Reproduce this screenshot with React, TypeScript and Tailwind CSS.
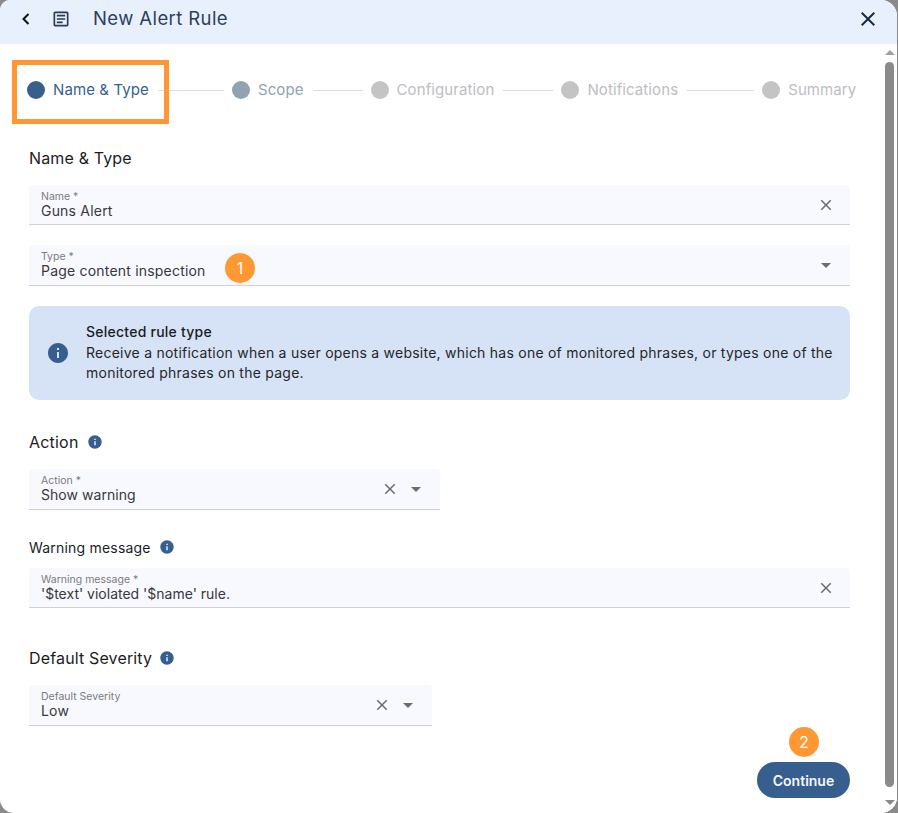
import React from "react";

const F = "[font-family:Inter,'Liberation_Sans',sans-serif]";

function InfoIcon({ size }: { size: number }) {
  return (
    <svg width={size} height={size} viewBox="0 0 24 24" className="shrink-0">
      <path
        fill="#365f8f"
        d="M12 2C6.48 2 2 6.48 2 12s4.48 10 10 10 10-4.48 10-10S17.52 2 12 2zm1 15h-2v-6h2v6zm0-8h-2V7h2v2z"
      />
    </svg>
  );
}

function Clear() {
  return (
    <svg width="18" height="18" viewBox="0 0 24 24" className="shrink-0">
      <path
        fill="#6b6b70"
        d="M19 6.41 17.59 5 12 10.59 6.41 5 5 6.41 10.59 12 5 17.59 6.41 19 12 13.41 17.59 19 19 17.59 13.41 12z"
      />
    </svg>
  );
}

function Caret() {
  return (
    <svg width="24" height="24" viewBox="0 0 24 24" className="shrink-0">
      <path fill="#6b6b70" d="M7 10l5 5 5-5z" />
    </svg>
  );
}

function Field({
  label,
  value,
  className,
  valueClass = "tracking-[0.2px]",
  children,
}: {
  label: string;
  value: string;
  className: string;
  valueClass?: string;
  children?: React.ReactNode;
}) {
  return (
    <div
      className={`flex items-center justify-between rounded-t-[4px] border-b border-[#d0d0d6] bg-[#f8f9ff] pl-3 ${className}`}
    >
      <div className="mt-[5px] flex flex-col self-start">
        <span className="text-[10.5px] leading-[13px] text-[#7b7b80]">{label}</span>
        <span className={`text-[14px] leading-[16px] text-[#37373c] ${valueClass}`}>{value}</span>
      </div>
      {children}
    </div>
  );
}

function Step({ label, dot, text }: { label: string; dot: string; text: string }) {
  return (
    <div className="flex shrink-0 items-center gap-2">
      <span className={`h-[18px] w-[18px] rounded-full ${dot}`} />
      <span className={`text-[15px] leading-[18px] tracking-[0.1px] ${text}`}>{label}</span>
    </div>
  );
}

function Line({ className }: { className: string }) {
  return <div className={`ml-[9px] mr-2 h-px shrink-0 bg-[#dcdcdc] ${className}`} />;
}

function Badge({ n, className }: { n: string; className: string }) {
  return (
    <span
      className={`absolute flex h-[30px] w-[30px] items-center justify-center rounded-full bg-[#ff9833] text-[16px] text-white ${className}`}
    >
      {n}
    </span>
  );
}

export default function App() {
  return (
    <div className={`relative h-[813px] w-[898px] overflow-hidden bg-[#8a8a8a] ${F}`}>
      <div className="flex h-[813px] w-[897px] flex-col overflow-hidden rounded-tl-[10px] rounded-tr-[16px] rounded-bl-[14px] rounded-br-[16px] bg-white">
        <header className="flex h-[44px] shrink-0 items-center bg-[#e9f0fd] pb-[6px] pl-[17px] pr-[17px]">
          <svg width="18" height="18" viewBox="0 0 18 18">
            <path fill="none" stroke="#111" strokeWidth="2" d="M11.5 4 6.5 9l5 5" />
          </svg>
          <svg width="20" height="20" viewBox="0 0 24 24" className="ml-[16px]">
            <path
              fill="#2a3a55"
              d="M19 5v14H5V5h14m0-2H5c-1.1 0-2 .9-2 2v14c0 1.1.9 2 2 2h14c1.1 0 2-.9 2-2V5c0-1.100-.9-2-2-2zM14 17H7v-2h7v2zm3-4H7v-2h10v2zm0-4H7V7h10v2z"
            />
          </svg>
          <h1 className="ml-[22px] text-[18.5px] tracking-[0.4px] text-[#2d3f5c]">New Alert Rule</h1>
          <svg width="24" height="24" viewBox="0 0 24 24" className="ml-auto">
            <path
              fill="#1b2a44"
              d="M19 6.41 17.59 5 12 10.59 6.41 5 5 6.41 10.59 12 5 17.59 6.41 19 12 13.41 17.59 19 19 17.59 13.41 12z"
            />
          </svg>
        </header>

        <div className="flex min-h-0 flex-1">
          <main className="min-w-0 flex-1 pl-[29px] pr-[32px]">
            <div className="-ml-[2px] mt-[37px] flex h-[18px] items-center">
              <Step label="Name & Type" dot="bg-[#365f8f]" text="text-[#365f8f]" />
              <Line className="w-[66px]" />
              <Step label="Scope" dot="bg-[#8fa3b0]" text="text-[#8fa3b0]" />
              <Line className="w-[50px]" />
              <Step label="Configuration" dot="bg-[#c4c4c4]" text="text-[#bdbdc2]" />
              <Line className="w-[50px]" />
              <Step label="Notifications" dot="bg-[#c4c4c4]" text="text-[#bdbdc2]" />
              <Line className="w-[67px]" />
              <Step label="Summary" dot="bg-[#c4c4c4]" text="text-[#bdbdc2]" />
            </div>

            <h2 className="mt-[49px] text-[16px] leading-[20px] tracking-[0.15px] text-[#1c1c1f]">Name &amp; Type</h2>
            <Field label="Name *" value="Guns Alert" className="mt-[17px] h-[40px] pr-[15px]">
              <Clear />
            </Field>
            <Field label="Type *" value="Page content inspection" className="mt-[20px] h-[41px] pr-[12px]">
              <Caret />
            </Field>

            <div className="mt-[20px] flex h-[94px] items-center rounded-[10px] bg-[#d6e3f6] pl-[17px] pr-4">
              <InfoIcon size={24} />
              <div className="ml-[16px] text-[14px] leading-[20.5px] tracking-[0.24px] text-[#26262a]">
                <div className="font-medium text-[#1c1c1f]">Selected rule type</div>
                <div>
                  Receive a notification when a user opens a website, which has one of monitored phrases, or types one of the monitored phrases on the page.
                </div>
              </div>
            </div>

            <div className="mt-[32px] flex h-[20px] items-center gap-[8px]">
              <h2 className="text-[16px] tracking-[0.2px] text-[#1c1c1f]">Action</h2>
              <InfoIcon size={16} />
            </div>
            <Field label="Action *" value="Show warning" valueClass="tracking-[0.05px]" className="mt-[17px] h-[41px] w-[411px] pr-[12px]">
              <div className="flex items-center gap-[5px]">
                <Clear />
                <Caret />
              </div>
            </Field>

            <div className="mt-[27px] flex h-[20px] items-center gap-[8px]">
              <h3 className="text-[14px] tracking-[0.2px] text-[#1c1c1f]">Warning message</h3>
              <InfoIcon size={16} />
            </div>
            <Field label="Warning message *" value="'$text' violated '$name' rule." valueClass="tracking-normal" className="mt-[11px] h-[40px] pr-[15px]">
              <Clear />
            </Field>

            <div className="mt-[40px] flex h-[20px] items-center gap-[7px]">
              <h2 className="text-[16px] tracking-[0.15px] text-[#1c1c1f]">Default Severity</h2>
              <InfoIcon size={16} />
            </div>
            <Field label="Default Severity" value="Low" className="mt-[17px] h-[41px] w-[403px] pr-[12px]">
              <div className="flex items-center gap-[5px]">
                <Clear />
                <Caret />
              </div>
            </Field>

            <div className="mt-[36px] flex justify-end">
              <button className="flex h-[36px] w-[93px] items-center justify-center rounded-full bg-[#365f8f] text-[14px] font-semibold text-[#f4f7fb]">
                Continue
              </button>
            </div>
          </main>

          <aside className="flex w-[15px] shrink-0 flex-col items-center bg-white pt-[6px]">
            <span className="h-0 w-0 border-x-[5px] border-b-[5px] border-x-transparent border-b-[#a0a0a0]" />
            <span className="mt-[7px] h-[725px] w-[9px] shrink-0 rounded-full bg-[#8a8a8a]" />
            <span className="mt-[13px] h-0 w-0 border-x-[5px] border-t-[5px] border-x-transparent border-t-[#8a8a8a]" />
          </aside>
        </div>
      </div>

      <div className="absolute left-[12px] top-[60px] h-[64px] w-[157px] border-[5px] border-[#ff9833]" />
      <Badge n="1" className="left-[225px] top-[253px]" />
      <Badge n="2" className="left-[789px] top-[727px]" />
    </div>
  );
}
